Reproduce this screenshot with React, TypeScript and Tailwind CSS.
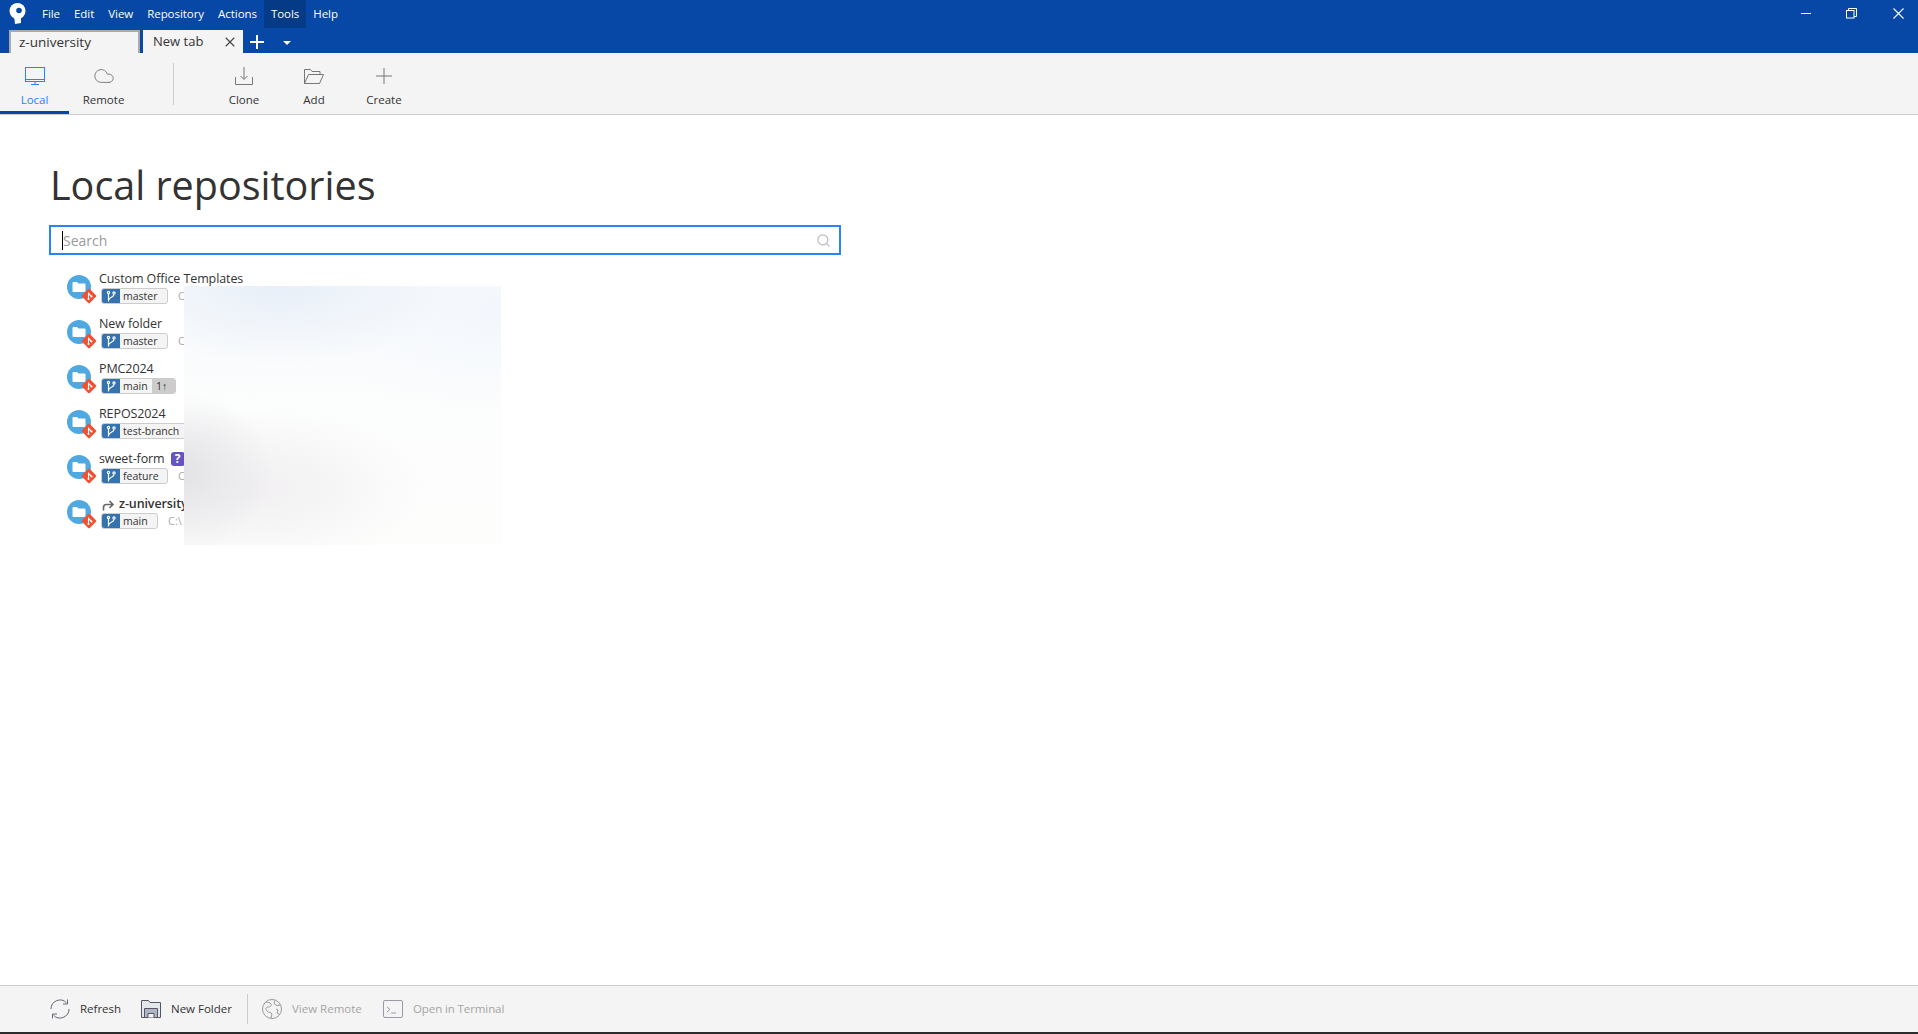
import { Cloud, Search, X } from 'lucide-react'

const FONT = "font-['Open_Sans','Noto_Sans',sans-serif]"

const menus = ['File', 'Edit', 'View', 'Repository', 'Actions', 'Tools', 'Help']

const repos = [
  { name: 'Custom Office Templates', branch: 'master', w: 'w-[47px]' },
  { name: 'New folder', branch: 'master', w: 'w-[47px]' },
  { name: 'PMC2024', branch: 'main', w: 'w-[32px]', ahead: true },
  { name: 'REPOS2024', branch: 'test-branch', w: 'w-[70px]' },
  { name: 'sweet-form', branch: 'feature', w: 'w-[47px]', unknown: true },
  { name: 'z-university', branch: 'main', w: 'w-[37px]', current: true },
]

const BranchIcon = () => (
  <svg width="12" height="13" viewBox="0 0 12 13" fill="none" stroke="white" strokeWidth="1.2">
    <circle cx="3.500" cy="2.500" r="1.100" />
    <circle cx="9" cy="3" r="1.100" />
    <path d="M3.500 4v7.500M9 4.500c0 3-5.500 2.500-5.500 6" />
  </svg>
)

const RepoIcon = () => (
  <div className="mt-[5px] h-[32px] w-[32px] shrink-0">
    <svg width="32" height="32" viewBox="0 0 32 32">
      <circle cx="12" cy="12" r="12" fill="#4fa8e0" />
      <path d="M5.500 8a1 1 0 0 1 1-1h3.500l1.500 1.500h6a1 1 0 0 1 1 1v6.500a1 1 0 0 1-1 1h-11a1 1 0 0 1-1-1z" fill="white" />
      <rect x="16.500" y="15.500" width="11" height="11" rx="1.200" transform="rotate(45 22 21)" fill="#f05133" />
      <path d="M21.500 17.500v6.500M21.500 18.500l3 3" stroke="white" strokeWidth="1.100" fill="none" />
      <circle cx="21.500" cy="24" r="1" fill="white" />
      <circle cx="24.500" cy="21.500" r="1" fill="white" />
    </svg>
  </div>
)

const RepoRow = ({ repo }: { repo: (typeof repos)[number] }) => (
  <div className="flex h-[45px] items-start pl-[67px]">
    <RepoIcon />
    <div className="flex flex-col">
      <div className="flex h-[18px] items-center text-[12.500px] leading-[18px] tracking-[-0.1px] text-[#333]">
        {repo.current && (
          <svg width="13" height="12" viewBox="0 0 13 12" fill="none" stroke="#666" strokeWidth="1.600" className="ml-[3px] mr-[4px] mt-[2px]">
            <path d="M1.500 11.500V8.500c0-2 1-3 3-3h6M7.500 2l3.500 3.500L7.500 9" />
          </svg>
        )}
        <span className={repo.current ? 'font-semibold' : ''}>{repo.name}</span>
        {repo.unknown && (
          <span className="ml-[6px] flex h-[14px] w-[14px] items-center justify-center rounded-[3px] bg-[#6554c0] text-[12px] font-bold text-white">?</span>
        )}
      </div>
      <div className="ml-[2px] flex items-center">
        <div className="flex h-[16px] overflow-hidden rounded-[3px] border border-[#ccc] bg-[#f4f4f4] text-[10.500px] leading-[14px] text-[#333]">
          <span className="flex w-[18px] items-center justify-center bg-[#3572b0]">
            <BranchIcon />
          </span>
          <span className={`${repo.w} whitespace-nowrap pl-[3px]`}>{repo.branch}</span>
          {repo.ahead && <span className="w-[23px] bg-[#ccc] pl-[4px]">1↑</span>}
        </div>
        <span className="ml-[10px] text-[11px] leading-[14px] text-[#aaa]">C:\</span>
      </div>
    </div>
  </div>
)

const ToolButton = ({ icon, label, active, w }: { icon: React.ReactNode; label: string; active?: boolean; w: string }) => (
  <div className={`flex h-full flex-col items-center pt-[11px] ${w} ${active ? 'border-b-[3px] border-[#0747a6] text-[#2684ff]' : 'text-[#333]'}`}>
    <div className="flex h-[24px] items-center justify-center">{icon}</div>
    <span className="mt-[4px] text-[11.500px] leading-[16px]">{label}</span>
  </div>
)

const App = () => {
  return (
    <div className={`flex h-[1034px] w-[1918px] flex-col overflow-hidden bg-white ${FONT}`}>
      <div className="h-[53px] bg-[#0747a6] text-white">
        <div className="flex h-[28px]">
          <div className="flex w-[35px] items-center justify-center">
            <svg width="18" height="22" viewBox="0 0 18 22">
              <path d="M5 12l1 9 6-1 0-7z" fill="white" />
              <circle cx="8.500" cy="8" r="8" fill="white" />
              <circle cx="10" cy="7.500" r="2.800" fill="#0747a6" />
            </svg>
          </div>
          <div className="flex text-[11.500px] leading-[28px] tracking-[-0.05px]">
            {menus.map((m) => (
              <span key={m} className={`px-[7px] ${m === 'Tools' ? 'bg-[#053a86]' : ''}`}>{m}</span>
            ))}
          </div>
          <div className="ml-auto flex items-center pb-[1px] pr-[14px]">
            <div className="mr-[35px] h-px w-[10px] bg-white" />
            <svg width="11" height="11" viewBox="0 0 11 11" fill="none" stroke="white" className="mr-[36px]">
              <rect x="0.500" y="2.500" width="7.500" height="7.500" />
              <path d="M2.500 2.500V0.500h8v8h-2.500" />
            </svg>
            <svg width="11" height="11" viewBox="0 0 11 11" stroke="white" strokeWidth="1.100">
              <path d="M0.500 0.500l10 10M10.500 0.500l-10 10" />
            </svg>
          </div>
        </div>
        <div className="flex h-[25px] items-end pl-[9px]">
          <div className="h-[23px] w-[131px] border-2 border-b-0 border-[#aaa] bg-[#f4f4f4] pl-[8px] text-[13.500px] leading-[21px] text-[#333]">z-university</div>
          <div className="ml-[3px] flex h-[23px] w-[100px] items-center bg-[#f4f4f4] pb-px pl-[10px] text-[13px] text-[#333]">
            <span className="mt-[2px]">New tab</span>
            <X size={16} strokeWidth={1.600} className="ml-auto mr-[5px] mt-[2px] text-[#444]" />
          </div>
          <div className="flex h-[23px] items-center">
            <svg width="14" height="14" viewBox="0 0 14 14" stroke="white" strokeWidth="2" className="ml-[7px]">
              <path d="M7 0v14M0 7h14" />
            </svg>
            <svg width="8" height="4" viewBox="0 0 8 4" fill="white" className="ml-[19px] mt-[2px]">
              <path d="M0 0h8L4 4z" />
            </svg>
          </div>
        </div>
      </div>

      <div className="flex h-[62px] items-stretch border-b border-[#ccc] bg-[#f4f4f4]">
        <ToolButton
          w="w-[69px]"
          active
          label="Local"
          icon={
            <svg width="20" height="18" viewBox="0 0 20 18" fill="none" stroke="#2684ff">
              <rect x="0.500" y="0.500" width="19" height="14" />
              <path d="M0 12.500h20M10 15v2M6 17.500h8" />
            </svg>
          }
        />
        <ToolButton w="w-[69px]" label="Remote" icon={<Cloud size={22} strokeWidth={1} className="text-[#777]" />} />
        <div className="ml-[35px] mt-[10px] h-[42px] w-px bg-[#ccc]" />
        <div className="ml-[35px] flex">
          <ToolButton
            w="w-[70px]"
            label="Clone"
            icon={
              <svg width="18" height="18" viewBox="0 0 18 18" fill="none" stroke="#777">
                <path d="M0.500 10v7.500h17V10M9 0v12M5.500 9L9 12.500 12.500 9" />
              </svg>
            }
          />
          <ToolButton
            w="w-[70px]"
            label="Add"
            icon={
              <svg width="20" height="15" viewBox="0 0 20 15" fill="none" stroke="#777">
                <path d="M0.500 14.500v-14h6l1.500 2h8v2.500M0.500 14.500h15l4-9H4.500z" />
              </svg>
            }
          />
          <ToolButton
            w="w-[70px]"
            label="Create"
            icon={
              <svg width="16" height="16" viewBox="0 0 16 16" stroke="#777">
                <path d="M8 0v16M0 8h16" />
              </svg>
            }
          />
        </div>
      </div>

      <div className="relative flex-1">
        <h1 className="mt-[47px] pl-[50px] text-[39.500px] font-normal leading-[47px] text-[#333]">Local repositories</h1>
        <div className="ml-[49px] mt-[16px] flex h-[30px] w-[792px] items-center border-2 border-[#2684ff] pl-[11px] pr-[8px]">
          <div className="h-[19px] w-px bg-black" />
          <span className="text-[14px] text-[#999]">Search</span>
          <Search size={15} strokeWidth={2} className="ml-auto text-[#bbb]" />
        </div>
        <div className="mt-[15px] flex flex-col">
          {repos.map((r) => (
            <RepoRow key={r.name} repo={r} />
          ))}
        </div>
        {/* blurred out part of the list */}
        <div className="absolute left-[184px] top-[171px] h-[259px] w-[317px] bg-[radial-gradient(ellipse_90px_80px_at_0%_72%,#e3e3e6,transparent),radial-gradient(ellipse_170px_80px_at_22%_78%,#f1eff1,transparent),radial-gradient(ellipse_170px_80px_at_30%_0%,#e8eff8,transparent),radial-gradient(ellipse_200px_100px_at_100%_10%,#f3f7fd,transparent),linear-gradient(#f7f9fc,#fcfdfd_45%,#fdfdfc)]" />
      </div>

      <div className="flex h-[47px] items-center whitespace-nowrap border-t border-[#ccc] bg-[#f4f4f4] pl-[50px] text-[11.500px] text-[#333]">
        <svg width="20" height="20" viewBox="0 0 20 20" fill="none" stroke="#667" className="shrink-0">
          <path d="M1 10a9 9 0 0 1 15.500-6.200M19 10a9 9 0 0 1-15.500 6.200" />
          <path d="M17.500 0.500v4.500h-4.500M2.500 19.500v-4.500h4.500" />
        </svg>
        <span className="ml-[10px] w-[39px]">Refresh</span>
        <svg width="20" height="18" viewBox="0 0 20 18" fill="none" stroke="#556" className="ml-[22px] shrink-0">
          <path d="M0.500 17.500v-17h7l1.500 2h10.500v15z" fill="#e4e7ec" />
          <path d="M3.500 17.500v-9h13v9z" fill="#aeb6c4" />
          <path d="M7 17.500v-4h6v4" fill="#f4f4f4" />
        </svg>
        <span className="ml-[10px] w-[60px]">New Folder</span>
        <div className="ml-[16px] h-[30px] w-px bg-[#ccc]" />
        <svg width="20" height="20" viewBox="0 0 20 20" fill="none" stroke="#999" className="ml-[14px] shrink-0">
          <circle cx="10" cy="10" r="9.500" />
          <path d="M4 3c2 1 4 0 5 2s-1 3-3 3-3 2-1 4 4 1 5 3l-1 4M13 1.500l-1 3 3 2 3.500-.5M14 10l2 1-1 3 2 1" />
        </svg>
        <span className="ml-[10px] w-[69px] text-[#a5a5a5]">View Remote</span>
        <svg width="20" height="18" viewBox="0 0 20 18" fill="none" stroke="#99a" className="ml-[22px] shrink-0">
          <rect x="0.500" y="0.500" width="19" height="17" rx="1.500" />
          <path d="M4 7l3 2.500L4 12M8 13h5" />
        </svg>
        <span className="ml-[10px] tracking-[-0.1px] text-[#a5a5a5]">Open in Terminal</span>
      </div>
      <div className="h-[2px] bg-[#2b2b2b]" />
    </div>
  )
}

export default App
